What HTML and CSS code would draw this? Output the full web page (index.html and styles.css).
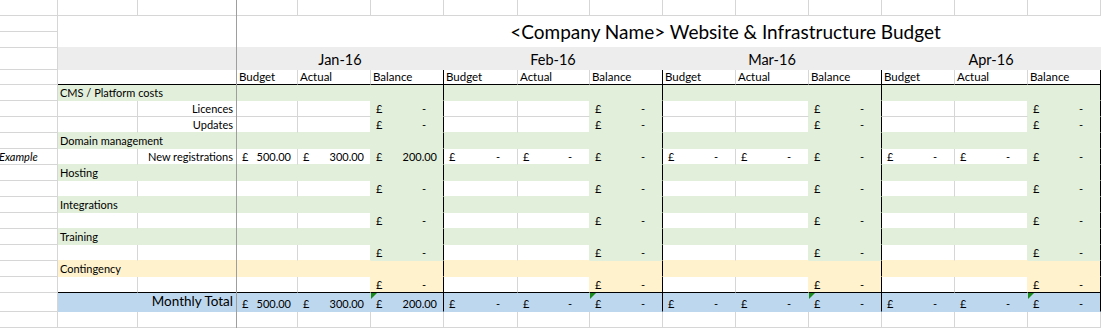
FILE: index.html
```html
<!DOCTYPE html>
<html lang="en">
<head>
<meta charset="utf-8">
<title>Website &amp; Infrastructure Budget</title>
<link rel="stylesheet" href="styles.css">
</head>
<body>
<div class="sheet">
  <!-- row 1 -->
  <div class="c"></div><div class="c"></div><div class="c"></div>
  <div class="c"></div><div class="c"></div><div class="c"></div>
  <div class="c"></div><div class="c"></div><div class="c"></div>
  <div class="c"></div><div class="c"></div><div class="c"></div>
  <div class="c"></div><div class="c"></div><div class="c"></div>
  <!-- rows 2-3 -->
  <div class="c"></div>
  <div class="c title"><span>&lt;Company Name&gt; Website &amp; Infrastructure Budget</span></div>
  <div class="c"></div>
  <!-- row 4: months -->
  <div class="c"></div>
  <div class="c band s2"></div>
  <div class="c band s3 month">Jan-16</div>
  <div class="c band s3 month">Feb-16</div>
  <div class="c band s3 month">Mar-16</div>
  <div class="c band s3 month">Apr-16</div>
  <!-- row 5: column headers -->
  <div class="c"></div>
  <div class="c s2 kb"></div>
  <div class="c h kb">Budget</div><div class="c h kb">Actual</div><div class="c h kb end">Balance</div>
  <div class="c h kb">Budget</div><div class="c h kb">Actual</div><div class="c h kb end">Balance</div>
  <div class="c h kb">Budget</div><div class="c h kb">Actual</div><div class="c h kb end">Balance</div>
  <div class="c h kb">Budget</div><div class="c h kb">Actual</div><div class="c h kb end">Balance</div>
  <!-- row 6: CMS -->
  <div class="c"></div>
  <div class="c g s5 end cat">CMS / Platform costs</div>
  <div class="c g s3 end"></div><div class="c g s3 end"></div><div class="c g s3 end"></div>
  <!-- row 7: Licences -->
  <div class="c"></div><div class="c"></div><div class="c lbl">Licences</div>
  <div class="c"></div><div class="c rg"></div><div class="c g end m"><span>£</span><span class="z">-</span></div>
  <div class="c"></div><div class="c rg"></div><div class="c g end m"><span>£</span><span class="z">-</span></div>
  <div class="c"></div><div class="c rg"></div><div class="c g end m"><span>£</span><span class="z">-</span></div>
  <div class="c"></div><div class="c rg"></div><div class="c g end m"><span>£</span><span class="z">-</span></div>
  <!-- row 8: Updates -->
  <div class="c"></div><div class="c tg"></div><div class="c lbl tg">Updates</div>
  <div class="c tg"></div><div class="c rg tg"></div><div class="c g end m"><span>£</span><span class="z">-</span></div>
  <div class="c tg"></div><div class="c rg tg"></div><div class="c g end m"><span>£</span><span class="z">-</span></div>
  <div class="c tg"></div><div class="c rg tg"></div><div class="c g end m"><span>£</span><span class="z">-</span></div>
  <div class="c tg"></div><div class="c rg tg"></div><div class="c g end m"><span>£</span><span class="z">-</span></div>
  <!-- row 9: Domain -->
  <div class="c"></div>
  <div class="c g s5 end cat">Domain management</div>
  <div class="c g s3 end"></div><div class="c g s3 end"></div><div class="c g s3 end"></div>
  <!-- row 10: New registrations -->
  <div class="c ex">Example</div><div class="c tg"></div><div class="c lbl tg">New registrations</div>
  <div class="c tg m"><span>£</span><span>500.00</span></div><div class="c rg tg m"><span>£</span><span>300.00</span></div><div class="c g end m"><span>£</span><span>200.00</span></div>
  <div class="c tg m"><span>£</span><span class="z">-</span></div><div class="c rg tg m"><span>£</span><span class="z">-</span></div><div class="c g end m"><span>£</span><span class="z">-</span></div>
  <div class="c tg m"><span>£</span><span class="z">-</span></div><div class="c rg tg m"><span>£</span><span class="z">-</span></div><div class="c g end m"><span>£</span><span class="z">-</span></div>
  <div class="c tg m"><span>£</span><span class="z">-</span></div><div class="c rg tg m"><span>£</span><span class="z">-</span></div><div class="c g end m"><span>£</span><span class="z">-</span></div>
  <!-- row 11: Hosting -->
  <div class="c"></div>
  <div class="c g s5 end cat">Hosting</div>
  <div class="c g s3 end"></div><div class="c g s3 end"></div><div class="c g s3 end"></div>
  <!-- row 12 -->
  <div class="c"></div><div class="c tg"></div><div class="c tg"></div>
  <div class="c tg"></div><div class="c rg tg"></div><div class="c g end m"><span>£</span><span class="z">-</span></div>
  <div class="c tg"></div><div class="c rg tg"></div><div class="c g end m"><span>£</span><span class="z">-</span></div>
  <div class="c tg"></div><div class="c rg tg"></div><div class="c g end m"><span>£</span><span class="z">-</span></div>
  <div class="c tg"></div><div class="c rg tg"></div><div class="c g end m"><span>£</span><span class="z">-</span></div>
  <!-- row 13: Integrations -->
  <div class="c"></div>
  <div class="c g s5 end cat">Integrations</div>
  <div class="c g s3 end"></div><div class="c g s3 end"></div><div class="c g s3 end"></div>
  <!-- row 14 -->
  <div class="c"></div><div class="c tg"></div><div class="c tg"></div>
  <div class="c tg"></div><div class="c rg tg"></div><div class="c g end m"><span>£</span><span class="z">-</span></div>
  <div class="c tg"></div><div class="c rg tg"></div><div class="c g end m"><span>£</span><span class="z">-</span></div>
  <div class="c tg"></div><div class="c rg tg"></div><div class="c g end m"><span>£</span><span class="z">-</span></div>
  <div class="c tg"></div><div class="c rg tg"></div><div class="c g end m"><span>£</span><span class="z">-</span></div>
  <!-- row 15: Training -->
  <div class="c"></div>
  <div class="c g s5 end cat">Training</div>
  <div class="c g s3 end"></div><div class="c g s3 end"></div><div class="c g s3 end"></div>
  <!-- row 16 -->
  <div class="c"></div><div class="c ty"></div><div class="c ty"></div>
  <div class="c ty"></div><div class="c rg ty"></div><div class="c g end m"><span>£</span><span class="z">-</span></div>
  <div class="c ty"></div><div class="c rg ty"></div><div class="c g end m"><span>£</span><span class="z">-</span></div>
  <div class="c ty"></div><div class="c rg ty"></div><div class="c g end m"><span>£</span><span class="z">-</span></div>
  <div class="c ty"></div><div class="c rg ty"></div><div class="c g end m"><span>£</span><span class="z">-</span></div>
  <!-- row 17: Contingency -->
  <div class="c"></div>
  <div class="c y s5 end cat">Contingency</div>
  <div class="c y s3 end"></div><div class="c y s3 end"></div><div class="c y s3 end"></div>
  <!-- row 18 -->
  <div class="c"></div><div class="c kb"></div><div class="c kb"></div>
  <div class="c kb"></div><div class="c ry kb"></div><div class="c y end kb m"><span>£</span><span class="z">-</span></div>
  <div class="c kb"></div><div class="c ry kb"></div><div class="c y end kb m"><span>£</span><span class="z">-</span></div>
  <div class="c kb"></div><div class="c ry kb"></div><div class="c y end kb m"><span>£</span><span class="z">-</span></div>
  <div class="c kb"></div><div class="c ry kb"></div><div class="c y end kb m"><span>£</span><span class="z">-</span></div>
  <!-- row 19: Monthly Total -->
  <div class="c"></div>
  <div class="c b s2 total">Monthly Total</div>
  <div class="c b m"><span>£</span><span>500.00</span></div><div class="c b m"><span>£</span><span>300.00</span></div><div class="c b end m tri"><span>£</span><span>200.00</span></div>
  <div class="c b m"><span>£</span><span class="z">-</span></div><div class="c b m"><span>£</span><span class="z">-</span></div><div class="c b end m tri"><span>£</span><span class="z">-</span></div>
  <div class="c b m"><span>£</span><span class="z">-</span></div><div class="c b m"><span>£</span><span class="z">-</span></div><div class="c b end m tri"><span>£</span><span class="z">-</span></div>
  <div class="c b m"><span>£</span><span class="z">-</span></div><div class="c b m"><span>£</span><span class="z">-</span></div><div class="c b end m tri"><span>£</span><span class="z">-</span></div>
  <!-- row 20 -->
  <div class="c"></div><div class="c"></div><div class="c"></div>
  <div class="c"></div><div class="c"></div><div class="c"></div>
  <div class="c"></div><div class="c"></div><div class="c"></div>
  <div class="c"></div><div class="c"></div><div class="c"></div>
  <div class="c"></div><div class="c"></div><div class="c"></div>

  <div class="freeze"></div>
</div>
</body>
</html>
```

FILE: styles.css
```css
:root {
  --grid: #d6d6d6;
  --freeze: #9e9e9e;
  --green: #e2efda;
  --yellow: #fff2cc;
  --blue: #bdd7ee;
  --band: #ededed;
}

* { box-sizing: border-box; }

html, body {
  margin: 0;
  background: #fff;
  overflow: hidden;
}

body {
  font-family: Lato, "Liberation Sans", sans-serif;
  color: #000;
}

.sheet {
  position: relative;
  display: grid;
  grid-template-columns: 58px 80px 99px 61px 73px 73px 74px 72px 73px 73px 73px 73px 73px 73px 73px;
  grid-template-rows: 16px 16px 16px 22px 15px repeat(13, 16px) 19px 16px;
  width: 1101px;
  height: 328px;
}

.c {
  background: #fff;
  border-right: 1px solid var(--grid);
  border-bottom: 1px solid var(--grid);
  overflow: hidden;
  white-space: nowrap;
  display: flex;
  align-items: flex-end;
  padding: 0 3px 1px;
  font-size: 11px;
  line-height: 13px;
}

.s2 { grid-column: span 2; }
.s3 { grid-column: span 3; }
.s5 { grid-column: span 5; }

.title {
  grid-column: 2 / -1;
  grid-row: span 2;
  border-right: none;
  border-bottom-color: var(--band);
  align-items: center;
  justify-content: center;
  padding: 0 0 0 292px;
  font-size: 19px;
  line-height: 22px;
}

.band {
  background: var(--band);
  border-color: var(--band);
}

.month {
  justify-content: center;
  align-items: center;
  font-size: 14.5px;
  line-height: 18px;
  padding: 2px 0 0;
}

.h { padding-left: 2px; font-size: 11.5px; }

.cat { padding-left: 2px; }

.lbl { justify-content: flex-end; padding-right: 3px; }

.ex {
  font-style: italic;
  padding-left: 0;
  text-indent: -1px;
}

.g { background: var(--green); border-color: var(--green); }
.y { background: var(--yellow); border-color: var(--yellow); }
.b { background: var(--blue); border-color: var(--blue); }

.tg { border-bottom-color: var(--green); }
.ty { border-bottom-color: var(--yellow); }
.rg { border-right-color: var(--green); }
.ry { border-right-color: var(--yellow); }

.end { border-right-color: #000; }
.kb { border-bottom-color: #000; }

.m {
  justify-content: space-between;
  padding: 0 6px 1px 5px;
}

.m .z { padding-right: 11px; }

.total {
  justify-content: flex-end;
  padding-right: 3px;
  font-size: 13.5px;
  line-height: 17px;
}

.tri { position: relative; }
.tri::before {
  content: "";
  position: absolute;
  left: 0;
  top: 0;
  border-top: 6px solid #1b8a1b;
  border-right: 6px solid transparent;
}

.freeze {
  position: absolute;
  left: 236px;
  top: 0;
  bottom: 0;
  width: 1px;
  background: var(--freeze);
}
```
